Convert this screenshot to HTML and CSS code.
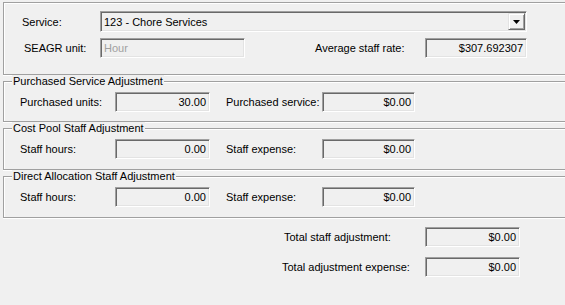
FILE: index.html
```html
<!DOCTYPE html>
<html lang="en">
<head>
    <meta charset="UTF-8">
    <title>Service Adjustment</title>
    <link rel="stylesheet" href="styles.css">
</head>
<body>
<div class="form">
    <div class="group group-main">
        <div class="row row-service">
            <span class="label label-service">Service:</span>
            <div class="combo">
                <span class="combo-text">123 - Chore Services</span>
                <span class="combo-btn">
                    <svg width="7" height="4" viewBox="0 0 7 4"><path d="M0 0H7L3.5 4Z" fill="#000"/></svg>
                </span>
            </div>
        </div>
        <div class="row row-unit">
            <span class="label label-unit">SEAGR unit:</span>
            <div class="field field-unit disabled">Hour</div>
            <span class="label label-rate">Average staff rate:</span>
            <div class="field field-rate num">$307.692307</div>
        </div>
    </div>

    <div class="group group-purchased">
        <div class="caption">Purchased Service Adjustment</div>
        <div class="row row-adjust">
            <span class="label label-left">Purchased units:</span>
            <div class="field field-left num">30.00</div>
            <span class="label label-right">Purchased service:</span>
            <div class="field field-right num">$0.00</div>
        </div>
    </div>

    <div class="group">
        <div class="caption">Cost Pool Staff Adjustment</div>
        <div class="row row-adjust">
            <span class="label label-left">Staff hours:</span>
            <div class="field field-left num">0.00</div>
            <span class="label label-right">Staff expense:</span>
            <div class="field field-right num">$0.00</div>
        </div>
    </div>

    <div class="group">
        <div class="caption">Direct Allocation Staff Adjustment</div>
        <div class="row row-adjust">
            <span class="label label-left">Staff hours:</span>
            <div class="field field-left num">0.00</div>
            <span class="label label-right">Staff expense:</span>
            <div class="field field-right num">$0.00</div>
        </div>
    </div>

    <div class="totals">
        <span class="label label-total-staff">Total staff adjustment:</span>
        <div class="field num">$0.00</div>
        <span class="label">Total adjustment expense:</span>
        <div class="field num">$0.00</div>
    </div>
</div>
</body>
</html>
```

FILE: styles.css
```css
* {
    margin: 0;
    padding: 0;
}
html,body {
    width: 100%;
    height: 100%;
}
body {
    background: #f0f0f0;
    font: 11px "Liberation Sans", Arial, sans-serif;
    color: #000;
    overflow: hidden;
}
.form {
    padding: 2px 0 0 3px;
}

/* etched group box: grey line with a white line beside it.
   the right side runs off the window, so no right border */
.group {
    box-sizing: border-box;
    height: 42px;
    border: 1px solid #a0a0a0;
    border-right: none;
    box-shadow: inset 1px 1px 0 #fff, 0 1px 0 #fff;
}
.group + .group {
    margin-top: 6px;
}
.group-main {
    height: 73px;
    padding-top: 8px;
}
.group-purchased {
    height: 41px;
}
.caption {
    width: fit-content;
    height: 13px;
    line-height: 13px;
    margin: -7px 0 0 8px;
    padding: 0 1px;
    background: #f0f0f0;
}

.row {
    display: flex;
    align-items: center;
}
.label {
    white-space: nowrap;
}

/* top box */
.row-service {
    padding-left: 18px;
}
.label-service {
    width: 78px;
}
.row-unit {
    margin-top: 6px;
    padding-left: 20px;
}
.label-unit {
    width: 76px;
}
.field-unit {
    width: 145px;
}
.label-rate {
    width: 110px;
    margin-left: 70px;
}
.field-rate {
    width: 102px;
}

/* adjustment boxes */
.row-adjust {
    margin-top: 4px;
    padding-left: 16px;
}
.label-left {
    width: 95px;
}
.field-left {
    width: 95px;
}
.label-right {
    width: 96px;
    margin-left: 16px;
}
.field-right {
    width: 93px;
}

/* sunken read-only box */
.field, .combo {
    box-sizing: border-box;
    height: 20px;
    border: 1px solid;
    border-color: #a0a0a0 #fff #fff #a0a0a0;
    box-shadow: inset 1px 1px 0 #696969, inset -1px -1px 0 #e3e3e3;
    background: #f0f0f0;
    padding: 0 3px;
    line-height: 18px;
    white-space: nowrap;
    overflow: hidden;
}
.num {
    text-align: right;
}
.disabled {
    color: #a0a0a0;
}

.combo {
    display: flex;
    align-items: center;
    width: 427px;
    height: 21px;
    padding: 0 1px 0 3px;
}
.combo-text {
    flex: 1;
}
.combo-btn {
    box-sizing: border-box;
    display: flex;
    align-items: center;
    justify-content: center;
    width: 17px;
    height: 17px;
    border: 1px solid;
    border-color: #e3e3e3 #696969 #696969 #e3e3e3;
    box-shadow: inset 1px 1px 0 #fff, inset -1px -1px 0 #a0a0a0;
    background: #f0f0f0;
}

.totals {
    display: grid;
    grid-template-columns: 143px 95px;
    row-gap: 10px;
    align-items: center;
    margin: 9px 0 0 279px;
}
.label-total-staff {
    margin-left: 2px;
}
```
